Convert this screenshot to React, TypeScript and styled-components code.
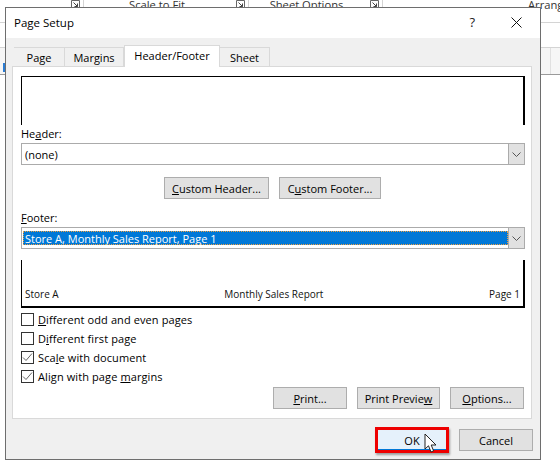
import React from 'react'
import styled, { createGlobalStyle } from 'styled-components'

const GlobalStyle = createGlobalStyle`
  * { box-sizing: border-box; }
  html, body { margin: 0; padding: 0; background: #fff; }
  body { font-family: "Open Sans", "Liberation Sans", sans-serif; font-size: 11px; color: #000; }
`

function Launcher() {
  return (
    <LauncherIcon width="9" height="9" viewBox="0 0 9 9">
      <path d="M.5 8.5V.5h8v8z" fill="none" stroke="#666" />
      <path d="M2.5 2.5l4 4M6.5 3.5v3h-3" fill="none" stroke="#444" />
    </LauncherIcon>
  )
}

function Chevron() {
  return (
    <svg width="9" height="5" viewBox="0 0 9 5">
      <path d="M.5.5l4 4 4-4" fill="none" stroke="#555" />
    </svg>
  )
}

function ComboBox({ value, focused }: { value: string; focused?: boolean }) {
  return (
    <Combo>
      <ComboValue $focused={focused}>{value}</ComboValue>
      <ComboArrow><Chevron /></ComboArrow>
    </Combo>
  )
}

function CheckRow({ checked, children }: { checked?: boolean; children: React.ReactNode }) {
  return (
    <CheckLine>
      <CheckBox>
        {checked && (
          <svg width="11" height="11" viewBox="0 0 11 11">
            <path d="M1 5.5l3 3 6-7" fill="none" stroke="#666" strokeWidth="1" />
          </svg>
        )}
      </CheckBox>
      <span>{children}</span>
    </CheckLine>
  )
}

export default function App() {
  return (
    <Page>
      <GlobalStyle />

      <Ribbon>
        <RibbonGroup $width={84}><RibbonLabel /><Launcher /></RibbonGroup>
        <RibbonGroup $width={165}><RibbonLabel>Scale to Fit</RibbonLabel><Launcher /></RibbonGroup>
        <RibbonGroup $width={134}><RibbonLabel>Sheet Options</RibbonLabel><Launcher /></RibbonGroup>
        <ArrangeLabel>Arrange</ArrangeLabel>
      </Ribbon>
      <SheetBand />
      <HeaderBand><BlueSliver /><BandCell /></HeaderBand>

      <Dialog>
        <TitleBar>
          <TitleText>Page Setup</TitleText>
          <TitleActions>
            <HelpMark>?</HelpMark>
            <svg width="11" height="11" viewBox="0 0 11 11">
              <path d="M.5.5l10 10M10.5.5l-10 10" fill="none" stroke="#111" strokeWidth="1" />
            </svg>
          </TitleActions>
        </TitleBar>

        <Body>
          <Tabs>
            <Tab $width={51}>Page</Tab>
            <Tab $width={59}>Margins</Tab>
            <Tab $width={96} $active>Header/Footer</Tab>
            <Tab $width={50}>Sheet</Tab>
          </Tabs>

          <Panel>
            <HeaderPreview />
            <FieldLabel $gap={0}>He<u>a</u>der:</FieldLabel>
            <ComboBox value="(none)" />

            <CustomRow>
              <Button $width={105}><u>C</u>ustom Header...</Button>
              <Button $width={102}>C<u>u</u>stom Footer...</Button>
            </CustomRow>

            <FieldLabel $gap={10}><u>F</u>ooter:</FieldLabel>
            <ComboBox value="Store A, Monthly Sales Report, Page 1" focused />

            <FooterPreview>
              <PreviewText>Store A</PreviewText>
              <PreviewText>Monthly Sales Report</PreviewText>
              <PreviewText>Page 1</PreviewText>
            </FooterPreview>

            <CheckList>
              <CheckRow><u>D</u>ifferent odd and even pages</CheckRow>
              <CheckRow>D<u>i</u>fferent first page</CheckRow>
              <CheckRow checked>Sca<u>l</u>e with document</CheckRow>
              <CheckRow checked>Align with page <u>m</u>argins</CheckRow>
            </CheckList>

            <PrintRow>
              <Button $width={74}><u>P</u>rint...</Button>
              <Button $width={83}>Print Previe<u>w</u></Button>
              <Button $width={74}><u>O</u>ptions...</Button>
            </PrintRow>
          </Panel>

          <DialogFooter>
            <OkButton>
              OK
              <Cursor width="14" height="21" viewBox="0 0 14 21">
                <path
                  d="M1 1v15l3.5-3.2L7 19l2.6-1.2L7.2 12H12z"
                  fill="#fff"
                  stroke="#222"
                  strokeWidth="1"
                  strokeLinejoin="round"
                />
              </Cursor>
            </OkButton>
            <Button $width={74}>Cancel</Button>
          </DialogFooter>
        </Body>
      </Dialog>
    </Page>
  )
}

const Page = styled.div`
  position: relative;
  width: 560px;
  height: 465px;
  overflow: hidden;
  background: #fff;
`

const Ribbon = styled.div`
  display: flex;
  height: 23px;
  border-bottom: 1px solid #d4d4d4;
`

const RibbonGroup = styled.div<{ $width: number }>`
  position: relative;
  flex: none;
  width: ${props => props.$width}px;
  height: 8px;
  padding-right: 18px;
  border-right: 1px solid #d4d4d4;
`

const RibbonLabel = styled.div`
  text-align: center;
  font-size: 11.2px;
  line-height: 9px;
  color: #333;
`

const LauncherIcon = styled.svg`
  position: absolute;
  right: 3px;
  top: 0;
`

const ArrangeLabel = styled.div`
  margin-left: 145px;
  flex: none;
  font-size: 11.2px;
  line-height: 9px;
  color: #333;
`

const SheetBand = styled.div`
  height: 25px;
  border-bottom: 1px solid #d4d4d4;
`

const HeaderBand = styled.div`
  display: flex;
  justify-content: space-between;
  height: 27px;
  background: #f6f6f6;
  border-bottom: 1px solid #9a9a9a;
`

const BlueSliver = styled.div`
  width: 2px;
  height: 9px;
  margin: 15px 0 0 3px;
  background: #2b7cd3;
`

const BandCell = styled.div`
  width: 10px;
  border-left: 1px solid #e0e0e0;
`

const Dialog = styled.div`
  position: absolute;
  left: 5px;
  top: 7px;
  width: 536px;
  height: 453px;
  display: flex;
  flex-direction: column;
  background: #f0f0f0;
  border: 1px solid #6e6e6e;
`

const TitleBar = styled.div`
  display: flex;
  align-items: center;
  justify-content: space-between;
  height: 30px;
  padding: 0 18px 2px 8px;
  background: #fff;
`

const TitleText = styled.div`
  font-size: 11.5px;
`

const TitleActions = styled.div`
  display: flex;
  align-items: center;
  gap: 36px;
`

const HelpMark = styled.span`
  font-size: 13px;
  color: #222;
`

const Body = styled.div`
  flex: 1;
  display: flex;
  flex-direction: column;
  padding: 7px 8px 0 6px;
`

const Tabs = styled.div`
  position: relative;
  z-index: 1;
  display: flex;
  align-items: flex-end;
  height: 22px;
  margin-bottom: -1px;
  padding-left: 2px;
`

const Tab = styled.div<{ $width: number; $active?: boolean }>`
  display: flex;
  align-items: center;
  justify-content: center;
  width: ${props => props.$width}px;
  height: ${props => (props.$active ? 22 : 20)}px;
  padding-bottom: ${props => (props.$active ? 3 : 0)}px;
  background: ${props => (props.$active ? '#fff' : '#f0f0f0')};
  border: 1px solid #d9d9d9;
  border-bottom: ${props => (props.$active ? 'none' : '1px solid #d9d9d9')};
  border-left-width: ${props => (props.$active ? 1 : 0)}px;
`

const Panel = styled.div`
  height: 353px;
  flex: none;
  padding: 9px 7px 0 8px;
  background: #fff;
  border: 1px solid #d9d9d9;
`

const HeaderPreview = styled.div`
  width: 504px;
  height: 49px;
  border-top: 1px solid #000;
  border-left: 1px solid #000;
  border-right: 2px solid #000;
`

const FieldLabel = styled.div<{ $gap: number }>`
  margin-top: ${props => props.$gap}px;
  height: 18px;
  line-height: 18px;
`

const Combo = styled.div`
  display: flex;
  align-items: stretch;
  width: 504px;
  height: 22px;
  padding: 1px;
  background: #fff;
  border: 1px solid #ababab;
`

const ComboValue = styled.div<{ $focused?: boolean }>`
  flex: 1;
  display: flex;
  align-items: center;
  padding-left: 2px;
  margin: ${props => (props.$focused ? '2px 0' : '0')};
  background: ${props => (props.$focused ? '#0078d7' : 'transparent')};
  color: ${props => (props.$focused ? '#fff' : '#000')};
  outline: ${props => (props.$focused ? '1px dotted #f0a040' : 'none')};
  outline-offset: -1px;
`

const ComboArrow = styled.div`
  display: flex;
  align-items: center;
  justify-content: center;
  width: 16px;
  margin: -1px -1px -1px 0;
  background: #e1e1e1;
  border-left: 1px solid #ababab;
`

const CustomRow = styled.div`
  display: flex;
  gap: 10px;
  margin: 12px 0 0 143px;
`

const Button = styled.div<{ $width: number }>`
  display: flex;
  align-items: center;
  justify-content: center;
  width: ${props => props.$width}px;
  height: 22px;
  background: #e1e1e1;
  border: 1px solid #adadad;
  white-space: pre;
`

const FooterPreview = styled.div`
  display: flex;
  align-items: flex-end;
  justify-content: space-between;
  width: 504px;
  height: 48px;
  margin-top: 11px;
  padding: 0 3px 5px 3px;
  border-left: 1px solid #000;
  border-right: 2px solid #000;
  border-bottom: 2px solid #000;
`

const PreviewText = styled.div`
  font-size: 10px;
  font-weight: 500;
  line-height: 13px;
  color: #111;
`

const CheckList = styled.div`
  display: flex;
  flex-direction: column;
  gap: 6px;
  margin-top: 5px;
  letter-spacing: 0.1px;
`

const CheckLine = styled.div`
  display: flex;
  align-items: center;
  gap: 4px;
  height: 13px;
`

const CheckBox = styled.div`
  display: flex;
  align-items: center;
  justify-content: center;
  width: 13px;
  height: 13px;
  background: #fff;
  border: 1px solid #333;
`

const PrintRow = styled.div`
  display: flex;
  gap: 10px;
  margin: 4px 0 0 252px;
`

const DialogFooter = styled.div`
  display: flex;
  align-items: center;
  justify-content: flex-end;
  gap: 10px;
  height: 40px;
  flex: none;
  margin-right: -1px;
  padding-top: 2px;
`

const OkButton = styled.div`
  position: relative;
  display: flex;
  align-items: center;
  justify-content: center;
  width: 74px;
  height: 26px;
  margin-left: -2px;
  background: #e5f1fb;
  border: 3px solid #ee0000;
  box-shadow: inset 0 -1px 0 #0078d7, 1px 2px 2px rgba(0, 0, 0, 0.35);
`

const Cursor = styled.svg`
  position: absolute;
  left: 46px;
  top: 3px;
`
